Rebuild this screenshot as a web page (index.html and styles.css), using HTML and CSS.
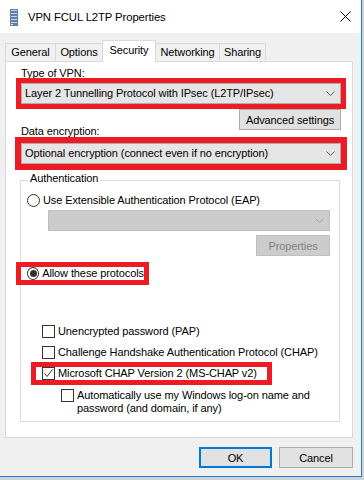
FILE: index.html
```html
<!DOCTYPE html>
<html lang="en">
<head>
    <meta charset="UTF-8">
    <meta name="viewport" content="width=device-width, initial-scale=1.0">
    <title>VPN FCUL L2TP Properties</title>
    <link rel="stylesheet" href="styles.css">
</head>
<body>
    <div class="window">
        <div class="titlebar">
            <svg class="app-icon" width="8" height="17" viewBox="0 0 8 17">
                <rect x="0" y="0" width="8" height="17" fill="#5d7fa8"/>
                <rect x="1" y="1" width="6" height="1" fill="#c9d6e6"/>
                <rect x="1" y="4" width="6" height="1" fill="#c9d6e6"/>
                <rect x="1" y="7" width="6" height="1" fill="#c9d6e6"/>
                <rect x="1" y="10" width="6" height="1" fill="#c9d6e6"/>
                <rect x="1" y="13" width="6" height="1" fill="#c9d6e6"/>
                <rect x="1" y="15" width="2" height="1" fill="#e8eef6"/>
            </svg>
            <span class="title">VPN FCUL L2TP Properties</span>
            <svg class="close" width="11" height="11" viewBox="0 0 11 11">
                <path d="M0.5 0.5 L10.5 10.5 M10.5 0.5 L0.5 10.5" stroke="#000" stroke-width="1" fill="none"/>
            </svg>
        </div>

        <div class="tabs">
            <div class="tab tab-general">General</div>
            <div class="tab tab-options">Options</div>
            <div class="tab tab-security active">Security</div>
            <div class="tab tab-networking">Networking</div>
            <div class="tab tab-sharing">Sharing</div>
        </div>

        <div class="panel">
            <div class="field-label">Type of VPN:</div>
            <div class="combo marked">
                <span>Layer 2 Tunnelling Protocol with IPsec (L2TP/IPsec)</span>
                <svg class="chevron" width="9" height="5" viewBox="0 0 9 5"><path d="M0.5 0.5 L4.5 4.5 L8.5 0.5" stroke="#555" fill="none"/></svg>
            </div>
            <div class="btn-row">
                <button class="btn btn-advanced">Advanced settings</button>
            </div>
            <div class="field-label label-encryption">Data encryption:</div>
            <div class="combo marked marked-thick">
                <span>Optional encryption (connect even if no encryption)</span>
                <svg class="chevron" width="9" height="5" viewBox="0 0 9 5"><path d="M0.5 0.5 L4.5 4.5 L8.5 0.5" stroke="#555" fill="none"/></svg>
            </div>

            <div class="group">
                <div class="group-title">Authentication</div>
                <div class="radio-row">
                    <span class="radio"></span>
                    <span>Use Extensible Authentication Protocol (EAP)</span>
                </div>
                <div class="combo combo-disabled">
                    <span></span>
                    <svg class="chevron" width="9" height="5" viewBox="0 0 9 5"><path d="M0.5 0.5 L4.5 4.5 L8.5 0.5" stroke="#a8a8a8" fill="none"/></svg>
                </div>
                <div class="btn-row">
                    <button class="btn btn-properties" disabled>Properties</button>
                </div>
                <div class="radio-row radio-allow marked">
                    <span class="radio checked"></span>
                    <span>Allow these protocols</span>
                </div>

                <div class="checks">
                    <div class="check-row">
                        <span class="check"></span>
                        <span>Unencrypted password (PAP)</span>
                    </div>
                    <div class="check-row">
                        <span class="check"></span>
                        <span>Challenge Handshake Authentication Protocol (CHAP)</span>
                    </div>
                    <div class="check-row check-mschap marked">
                        <span class="check">
                            <svg width="11" height="11" viewBox="0 0 11 11"><path d="M1.5 5.5 L4 8.5 L9.5 1.5" stroke="#333" fill="none"/></svg>
                        </span>
                        <span>Microsoft CHAP Version 2 (MS-CHAP v2)</span>
                    </div>
                    <div class="check-row check-sub">
                        <span class="check"></span>
                        <span class="sub-text">Automatically use my Windows log-on name and<br>password (and domain, if any)</span>
                    </div>
                </div>
            </div>
        </div>

        <div class="footer">
            <button class="btn btn-default">OK</button>
            <button class="btn btn-cancel">Cancel</button>
        </div>
    </div>
</body>
</html>
```

FILE: styles.css
```css
body {
    margin: 0;
    padding: 0;
    background-color: #d2d2d2;
    font-family: "Segoe UI", "Liberation Sans", Arial, sans-serif;
    font-size: 11px;
    letter-spacing: -0.1px;
    color: #000;
}
.window {
    width: 361px;
    height: 476px;
    background-color: #f0f0f0;
    border-right: 1px solid #1883d7;
    border-bottom: 1px solid #1883d7;
    white-space: nowrap;
}
.titlebar {
    height: 33px;
    background-color: #fff;
    display: flex;
    align-items: center;
}
.app-icon {
    margin-left: 10px;
    margin-top: 1px;
}
.title {
    margin-left: 10px;
    font-size: 11.3px;
    line-height: 15px;
    padding-top: 2px;
}
.close {
    margin-left: auto;
    margin-right: 10px;
}

/* tabs */
.tabs {
    display: flex;
    align-items: flex-end;
    height: 21px;
    margin-top: 7px;
    padding-left: 5px;
}
.tab {
    box-sizing: border-box;
    height: 18px;
    margin-right: -1px;
    padding-top: 1px;
    line-height: 15px;
    text-align: center;
    border: 1px solid #d9d9d9;
    border-bottom: none;
    background-color: #f0f0f0;
}
.tab-general { width: 51px; }
.tab-options { width: 48px; }
.tab-security { width: 54px; }
.tab-networking { width: 65px; }
.tab-sharing { width: 47px; }
.tab.active {
    position: relative;
    z-index: 1;
    height: 22px;
    margin-bottom: -1px;
    padding-top: 2px;
    background-color: #fff;
}

/* panel */
.panel {
    box-sizing: border-box;
    width: 348px;
    height: 377px;
    margin-left: 5px;
    padding: 4px 11px 0 15px;
    background-color: #fff;
    border: 1px solid #d9d9d9;
}
.field-label {
    line-height: 15px;
}
.label-encryption {
    margin-top: -6px;
}
.combo {
    box-sizing: border-box;
    display: flex;
    align-items: center;
    height: 21px;
    margin-top: 2px;
    padding: 0 5px 0 3px;
    background-color: #e5e5e5;
    border: 1px solid #acacac;
    line-height: 15px;
}
.combo span {
    flex: 1;
}
.marked {
    outline: 5px solid #ed1c24;
}
.marked-thick {
    margin-top: 4px;
    outline-width: 6px;
}
.btn-row {
    display: flex;
    justify-content: flex-end;
    margin-top: 5px;
}
.btn {
    box-sizing: border-box;
    height: 21px;
    padding: 0;
    font-family: inherit;
    font-size: 11px;
    letter-spacing: -0.1px;
    color: #000;
    background-color: #e1e1e1;
    border: 1px solid #adadad;
}
.btn-advanced {
    width: 102px;
}
.btn:disabled {
    color: #838383;
    background-color: #cccccc;
    border-color: #bfbfbf;
}

/* authentication group */
.group {
    margin-top: 16px;
    margin-left: -1px;
    width: 320px;
    height: 242px;
    box-sizing: border-box;
    padding: 0 9px 0 6px;
    border: 1px solid #dcdcdc;
}
.group-title {
    width: fit-content;
    margin: -10px 0 0 1px;
    padding: 0 2px;
    line-height: 15px;
    background-color: #fff;
}
.radio-row {
    display: flex;
    align-items: center;
    gap: 3px;
    margin-top: 7px;
    line-height: 15px;
}
.radio {
    box-sizing: border-box;
    width: 13px;
    height: 13px;
    border: 1px solid #333;
    border-radius: 50%;
    display: flex;
    align-items: center;
    justify-content: center;
    background-color: #fff;
}
.radio.checked::after {
    content: "";
    width: 7px;
    height: 7px;
    border-radius: 50%;
    background-color: #333;
}
.combo-disabled {
    margin-top: 2px;
    margin-left: 21px;
    background-color: #cccccc;
    border-color: #bfbfbf;
}
.btn-properties {
    width: 74px;
    margin-top: -1px;
}
.radio-allow {
    width: 123px;
    height: 13px;
    margin-top: 11px;
    margin-left: -6px;
    padding-left: 6px;
    box-sizing: border-box;
    background-color: #fff;
    line-height: 13px;
}
.checks {
    margin-top: 45px;
    margin-left: 15px;
}
.check-row {
    display: flex;
    align-items: flex-start;
    gap: 3px;
    margin-bottom: 8px;
    line-height: 13px;
}
.check {
    box-sizing: border-box;
    width: 13px;
    height: 13px;
    flex: none;
    border: 1px solid #333;
    background-color: #fff;
}
.check svg {
    display: block;
}
.check-mschap {
    width: 231px;
    margin-left: -6px;
    padding-left: 6px;
    box-sizing: border-box;
}
.check-sub {
    margin-left: 19px;
    margin-top: 9px;
}
.sub-text {
    line-height: 13px;
}

/* footer buttons */
.footer {
    display: flex;
    justify-content: flex-end;
    gap: 7px;
    margin-top: 9px;
    padding-right: 8px;
}
.btn-default {
    width: 73px;
    border: 2px solid #0078d7;
}
.btn-cancel {
    width: 74px;
}
```
